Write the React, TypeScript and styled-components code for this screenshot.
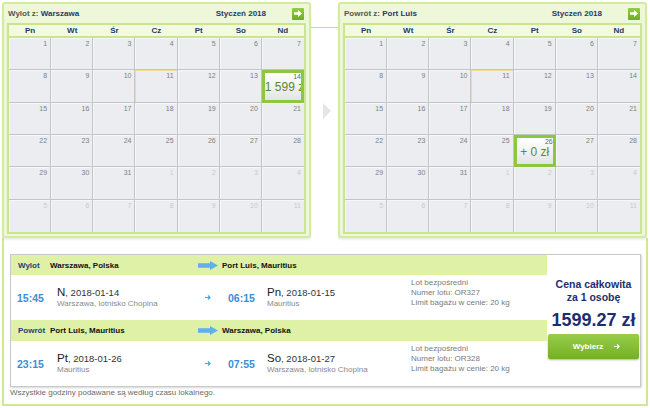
import React from 'react';
import styled, { createGlobalStyle } from 'styled-components';

const Global = createGlobalStyle`
  html, body { margin: 0; padding: 0; background: #fff; }
  body { font-family: "Liberation Sans", Arial, sans-serif; }
`;

const FONT = `"Liberation Sans", Arial, sans-serif`;

const Page = styled.div`
  width: 650px;
  height: 408px;
  box-sizing: border-box;
  padding: 2px 0 0 2px;
  overflow: hidden;
  font-family: ${FONT};
`;

const TopRow = styled.div`
  display: flex;
  align-items: flex-start;
`;

const Panel = styled.div`
  width: 309px;
  box-sizing: border-box;
  border: 2px solid #d3eb9f;
  border-radius: 3px;
  background: #eef8d9;
  padding: 0 3px 2px;
  box-shadow: 0 2px 2px rgba(0, 0, 0, 0.07);
  position: relative;
  z-index: 1;
`;

const PanelHeader = styled.div`
  height: 19px;
  display: flex;
  align-items: center;
  padding: 0 2px 0 1px;
  font: bold 8px ${FONT};
`;

const Title = styled.div`
  color: #555;
  flex: 1;
`;

const Strong = styled.span`
  color: #1e3a6e;
`;

const Month = styled.div`
  color: #1e3a6e;
  margin-right: 26px;
`;

const NextBtn = styled.div`
  width: 12px;
  height: 12px;
  border-radius: 1px;
  background: linear-gradient(#95cb48, #6fab22);
  display: flex;
  align-items: center;
  justify-content: center;
`;

const Grid = styled.div`
  border: 2px solid #c9e58d;
  background: #ebedf0;
`;

const DayNames = styled.div`
  display: grid;
  grid-template-columns: repeat(7, 1fr);
  height: 11px;
  background: #f3fae1;
  border-bottom: 2px solid #c9e58d;
`;

const DayName = styled.div`
  font: bold 8px/11px ${FONT};
  color: #24386b;
  text-align: center;
`;

const Cells = styled.div`
  display: grid;
  grid-template-columns: repeat(7, 1fr);
  grid-template-rows: repeat(6, 1fr);
  height: 194px;
`;

const DayCell = styled.div<{ $col: number; $row: number; $today?: boolean; $selected?: boolean }>`
  box-sizing: border-box;
  min-width: 0;
  overflow: hidden;
  display: flex;
  flex-direction: column;
  border-right: ${(p) => (p.$col < 6 ? '1px solid #c2c4c6' : 'none')};
  border-bottom: ${(p) => (p.$row < 5 ? '1px solid #c2c4c6' : 'none')};
  box-shadow: ${(p) => (p.$today ? 'inset 1px 1px 0 #f2dc9c' : 'inset 1px 1px 0 #f6f7f8')};
  ${(p) =>
    p.$selected &&
    `
    border: 3px solid #8dc63f;
    background: linear-gradient(#ffffff, #e3e4e6);
    box-shadow: none;
  `}
`;

const DayNum = styled.div<{ $other?: boolean; $selected?: boolean }>`
  font: 7px/9px ${FONT};
  text-align: right;
  padding: 1px 3px 0 0;
  color: ${(p) => (p.$other ? '#c9cbcd' : '#7d7f82')};
  ${(p) => p.$selected && `padding: 0; line-height: 7px; color: #666;`}
`;

const CellPrice = styled.div`
  font: 12px/14px ${FONT};
  color: #5b8a26;
  text-align: center;
  white-space: nowrap;
`;

const Middle = styled.div`
  width: 27px;
  display: flex;
  flex-direction: column;
`;

const Connector = styled.div`
  height: 1px;
  margin-top: 25px;
  background: #c6d9a9;
`;

const Triangle = styled.div`
  width: 0;
  height: 0;
  margin: 75px 0 0 12px;
  border-left: 8px solid #e3e5e7;
  border-top: 8px solid transparent;
  border-bottom: 8px solid transparent;
`;

const Bottom = styled.div`
  width: 646px;
  height: 168px;
  box-sizing: border-box;
  border: 2px solid #d0e894;
  border-top: none;
  padding: 16px 0 0 6px;
`;

const Card = styled.div`
  display: flex;
  width: 631px;
  height: 133px;
  box-sizing: border-box;
  border: 1px solid #c9c9c9;
  background: #fff;
  box-shadow: 1px 1px 2px rgba(0, 0, 0, 0.16);
`;

const Legs = styled.div`
  width: 536px;
  display: flex;
  flex-direction: column;
`;

const LegHeader = styled.div<{ $h: number }>`
  display: flex;
  align-items: center;
  height: ${(p) => p.$h}px;
  background: #dff1a7;
  font: bold 8px ${FONT};
`;

const HLabel = styled.div`
  width: 39px;
  box-sizing: border-box;
  padding-left: 7px;
  color: #1f3b7a;
`;

const HCity = styled.div<{ $w?: number }>`
  color: #111;
  ${(p) => (p.$w ? `width: ${p.$w}px;` : 'flex: 1;')}
`;

const ArrowSlot = styled.div<{ $w: number; $pad: number }>`
  width: ${(p) => p.$w}px;
  box-sizing: border-box;
  padding-left: ${(p) => p.$pad}px;
  display: flex;
  align-items: center;
`;

const LegRow = styled.div`
  display: flex;
  align-items: center;
  height: 45px;
`;

const Time = styled.div<{ $w: number; $pad: number }>`
  width: ${(p) => p.$w}px;
  box-sizing: border-box;
  padding-left: ${(p) => p.$pad}px;
  font: bold 10.5px ${FONT};
  color: #3b8ed8;
`;

const DateBlock = styled.div<{ $w: number }>`
  width: ${(p) => p.$w}px;
  display: flex;
  flex-direction: column;
`;

const DateLine = styled.div`
  font: 9.5px/12px ${FONT};
  color: #333;
`;

const Dow = styled.span`
  font-size: 11.5px;
  color: #222;
`;

const Place = styled.div`
  font: 8px/10px ${FONT};
  color: #8a8a8a;
`;

const Info = styled.div`
  flex: 1;
  align-self: flex-start;
  padding-top: 3px;
  font: 8px/10px ${FONT};
  color: #7a7a7a;
`;

const PriceCol = styled.div`
  width: 93px;
  display: flex;
  flex-direction: column;
  align-items: center;
  padding-top: 23px;
  box-sizing: border-box;
`;

const PriceLabel = styled.div`
  font: bold 10.5px/13px ${FONT};
  color: #1b2e6e;
  text-align: center;
`;

const PriceValue = styled.div`
  font: bold 18px/20px ${FONT};
  color: #1b2e6e;
  margin-top: 6px;
`;

const SelectBtn = styled.div`
  margin-top: 4px;
  width: 91px;
  height: 25px;
  box-sizing: border-box;
  border-radius: 2px;
  background: linear-gradient(#98cd4a, #74b025);
  box-shadow: 0 1px 2px rgba(0, 0, 0, 0.3);
  display: flex;
  align-items: center;
  justify-content: center;
  gap: 11px;
  padding-left: 6px;
  font: bold 8px ${FONT};
  color: #fff;
`;

const Footer = styled.div`
  font: 8px/10px ${FONT};
  color: #6a6a6a;
  padding-top: 1px;
`;

const NextIcon = () => (
  <svg width="8" height="7" viewBox="0 0 8 7">
    <path d="M0 2.2H4V0L8 3.5L4 7V4.8H0Z" fill="#fff" />
  </svg>
);

const BigArrow = () => (
  <svg width="20" height="9" viewBox="0 0 20 9">
    <path d="M0 2.2H12V0L20 4.5L12 9V6.8H0Z" fill="#5eb0ee" />
  </svg>
);

const SmallArrow = ({ color = '#4aa3e2' }: { color?: string }) => (
  <svg width="6" height="5" viewBox="0 0 6 5">
    <path d="M0 2.5H5M3 0.5L5 2.5L3 4.5" stroke={color} strokeWidth="1.2" fill="none" />
  </svg>
);

type CellData = { day: number; other: boolean };

const buildCells = (): CellData[] => {
  const cells: CellData[] = [];
  for (let d = 1; d <= 31; d++) cells.push({ day: d, other: false });
  for (let d = 1; cells.length < 42; d++) cells.push({ day: d, other: true });
  return cells;
};

const DOW = ['Pn', 'Wt', 'Śr', 'Cz', 'Pt', 'So', 'Nd'];

const Calendar = ({
  label,
  city,
  selected,
  price,
}: {
  label: string;
  city: string;
  selected: number;
  price: string;
}) => {
  const cells = buildCells();
  return (
    <Panel>
      <PanelHeader>
        <Title>
          {label} <Strong>{city}</Strong>
        </Title>
        <Month>Styczeń 2018</Month>
        <NextBtn>
          <NextIcon />
        </NextBtn>
      </PanelHeader>
      <Grid>
        <DayNames>
          {DOW.map((d) => (
            <DayName key={d}>{d}</DayName>
          ))}
        </DayNames>
        <Cells>
          {cells.map((c, i) => {
            const isSel = !c.other && c.day === selected;
            return (
              <DayCell
                key={i}
                $col={i % 7}
                $row={Math.floor(i / 7)}
                $today={!c.other && c.day === 11}
                $selected={isSel}
              >
                <DayNum $other={c.other} $selected={isSel}>
                  {c.day}
                </DayNum>
                {isSel && <CellPrice>{price}</CellPrice>}
              </DayCell>
            );
          })}
        </Cells>
      </Grid>
    </Panel>
  );
};

type LegProps = {
  kind: string;
  from: string;
  to: string;
  dep: string;
  depDow: string;
  depDate: string;
  depPlace: string;
  arr: string;
  arrDow: string;
  arrDate: string;
  arrPlace: string;
  flight: string;
  headerH: number;
};

const Leg = (p: LegProps) => (
  <>
    <LegHeader $h={p.headerH}>
      <HLabel>{p.kind}</HLabel>
      <HCity $w={148}>{p.from}</HCity>
      <ArrowSlot $w={24} $pad={0}>
        <BigArrow />
      </ArrowSlot>
      <HCity>{p.to}</HCity>
    </LegHeader>
    <LegRow>
      <Time $w={46} $pad={6}>
        {p.dep}
      </Time>
      <DateBlock $w={148}>
        <DateLine>
          <Dow>{p.depDow}</Dow>, {p.depDate}
        </DateLine>
        <Place>{p.depPlace}</Place>
      </DateBlock>
      <ArrowSlot $w={23} $pad={0}>
        <SmallArrow />
      </ArrowSlot>
      <Time $w={39} $pad={0}>
        {p.arr}
      </Time>
      <DateBlock $w={144}>
        <DateLine>
          <Dow>{p.arrDow}</Dow>, {p.arrDate}
        </DateLine>
        <Place>{p.arrPlace}</Place>
      </DateBlock>
      <Info>
        Lot bezpośredni
        <br />
        Numer lotu: {p.flight}
        <br />
        Limit bagażu w cenie: 20 kg
      </Info>
    </LegRow>
  </>
);

export default function App() {
  return (
    <Page>
      <Global />
      <TopRow>
        <Calendar label="Wylot z:" city="Warszawa" selected={14} price="1 599 zł" />
        <Middle>
          <Connector />
          <Triangle />
        </Middle>
        <Calendar label="Powrót z:" city="Port Luis" selected={26} price="+ 0 zł" />
      </TopRow>
      <Bottom>
        <Card>
          <Legs>
            <Leg
              kind="Wylot"
              from="Warszawa, Polska"
              to="Port Luis, Mauritius"
              dep="15:45"
              depDow="N"
              depDate="2018-01-14"
              depPlace="Warszawa, lotnisko Chopina"
              arr="06:15"
              arrDow="Pn"
              arrDate="2018-01-15"
              arrPlace="Mauritius"
              flight="OR327"
              headerH={20}
            />
            <Leg
              kind="Powrót"
              from="Port Luis, Mauritius"
              to="Warszawa, Polska"
              dep="23:15"
              depDow="Pt"
              depDate="2018-01-26"
              depPlace="Mauritius"
              arr="07:55"
              arrDow="So"
              arrDate="2018-01-27"
              arrPlace="Warszawa, lotnisko Chopina"
              flight="OR328"
              headerH={21}
            />
          </Legs>
          <PriceCol>
            <PriceLabel>
              Cena całkowita
              <br />
              za 1 osobę
            </PriceLabel>
            <PriceValue>1599.27 zł</PriceValue>
            <SelectBtn>
              Wybierz
              <SmallArrow color="#fff" />
            </SelectBtn>
          </PriceCol>
        </Card>
        <Footer>Wszystkie godziny podawane są według czasu lokalnego.</Footer>
      </Bottom>
    </Page>
  );
}
